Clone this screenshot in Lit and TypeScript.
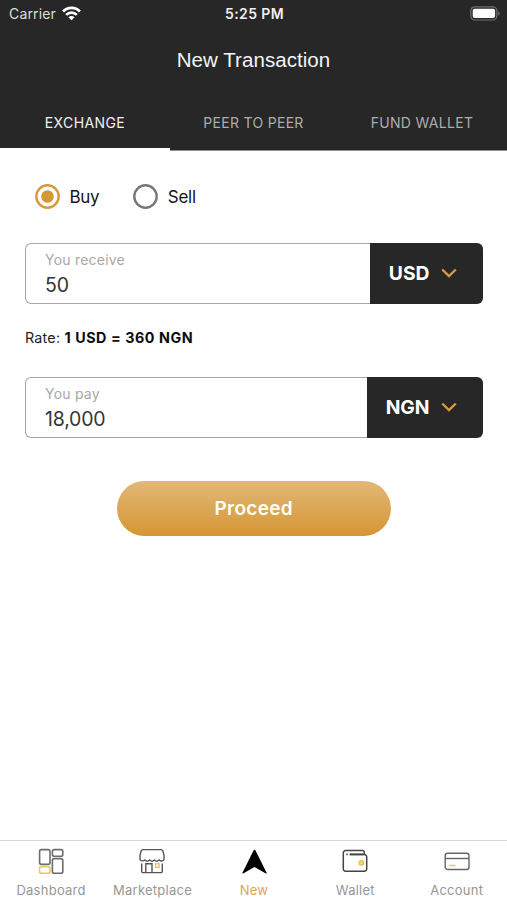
import { LitElement, html, css, svg } from "lit";
import { customElement } from "lit/decorators.js";
import { classMap } from "lit/directives/class-map.js";

@customElement("status-bar")
class StatusBar extends LitElement {
  static styles = css`
    :host { display: grid; grid-template-columns: 1fr auto 1fr; align-items: center; height: 27px; padding: 0 7px 1px 9px; color: #efefef; font-size: 14px; }
    .carrier { display: flex; align-items: center; gap: 6px; letter-spacing: 0.15px; color: #dedede; }
    .time { font-weight: 600; letter-spacing: 0.4px; }
    .battery { justify-self: end; display: block; }
    svg { display: block; }
  `;
  render() {
    return html`
      <div class="carrier"><span>Carrier</span>
        <svg width="19" height="15" viewBox="0 0 19 15" fill="none" stroke="#fff" stroke-width="2.7">
          <path d="M1.100 5.500a11.700 11.700 0 0 1 16.800 0"/><path d="M4.200 8.900a7.400 7.400 0 0 1 10.600 0"/>
          <path d="M9.500 14.300 6.400 11.200a4.400 4.400 0 0 1 6.200 0z" fill="#fff" stroke="none"/>
        </svg>
      </div>
      <div class="time">5:25 PM</div>
      <svg class="battery" width="30" height="15" viewBox="0 0 30 15">
        <rect x=".8" y=".8" width="26" height="13.2" rx="4" fill="none" stroke="#707073" stroke-width="1.2"/>
        <rect x="2.700" y="2.700" width="22.400" height="9.400" rx="2" fill="#fff"/>
        <path d="M28.200 5.200c2 .8 2 3.600 0 4.400z" fill="#707073"/>
      </svg>`;
  }
}

@customElement("tab-strip")
class TabStrip extends LitElement {
  static styles = css`
    :host { display: grid; grid-template-columns: 170px 167px 170px; height: 59px; border-bottom: 1px solid #8d8d8d; }
    .tab { display: flex; align-items: center; justify-content: center; padding-top: 3px; color: #adadad; font-size: 14px; letter-spacing: 0.3px; }
    .active { color: #f1f1f1; padding-top: 5px; border-bottom: 3px solid #fff; margin-bottom: -1px; letter-spacing: 0.4px; }
  `;
  render() {
    return ["EXCHANGE", "PEER TO PEER", "FUND WALLET"].map(
      (t, i) => html`<div class=${classMap({ tab: true, active: i === 0 })}>${t}</div>`
    );
  }
}

@customElement("radio-option")
class RadioOption extends LitElement {
  static properties = { label: {}, checked: { type: Boolean } };
  declare label: string;
  declare checked: boolean;
  static styles = css`
    :host { display: flex; align-items: center; gap: 9.5px; font-size: 17px; letter-spacing: -0.3px; color: #161616; }
    .ring { display: block; }
  `;
  render() {
    return html`
      <svg class="ring" width="25" height="25" viewBox="0 0 25 25">
        <circle cx="12.500" cy="12.500" r="11.200" fill="none" stroke=${this.checked ? "#d79a3a" : "#77787a"} stroke-width="2.4"/>
        <circle cx="12.500" cy="12.500" r="6.300" fill=${this.checked ? "#d49835" : "none"}/>
      </svg><span>${this.label}</span>`;
  }
}

@customElement("amount-field")
class AmountField extends LitElement {
  static properties = { label: {}, value: {}, currency: {} };
  declare label: string;
  declare value: string;
  declare currency: string;
  static styles = css`
    :host { display: flex; height: 61px; }
    .entry { flex: 1; box-sizing: border-box; border: 1px solid #a6a6a6; border-right: 0; border-radius: 6px 0 0 6px; padding: 6px 0 0 19px; }
    .label { font-size: 14px; line-height: 20px; letter-spacing: 0.22px; color: #a9a9a9; }
    .value { font-size: 19.5px; line-height: 30px; color: #353535; letter-spacing: -0.2px; }
    .currency { display: flex; align-items: center; gap: 11px; padding: 0 26px 0 18.5px; background: #272727; border-radius: 0 6px 6px 0; color: #fff; font-size: 19.3px; line-height: 23px; font-weight: 650; }
    svg { display: block; margin-top: -1px; }
  `;
  render() {
    return html`
      <div class="entry"><div class="label">${this.label}</div><div class="value">${this.value}</div></div>
      <div class="currency"><span>${this.currency}</span>
        <svg width="16" height="10" viewBox="0 0 16 10" fill="none" stroke="#d99a3c" stroke-width="2.4"><path d="m1.200 1.500 6.800 6.500 6.800-6.500"/></svg>
      </div>`;
  }
}

const icons = {
  dashboard: svg`<g fill="none" stroke="#6c6c6c" stroke-width="1.600">
    <rect x="1.600" y="1.600" width="10.400" height="14.800" rx="1.800"/><rect x="14.400" y="1.600" width="10.400" height="6.600" rx="1.800"/>
    <rect x="14.400" y="10.600" width="10.400" height="14.600" rx="1.800"/><rect x="1.600" y="18.600" width="10.400" height="6.600" rx="1.800" stroke="#ecc863"/></g>`,
  market: svg`<g fill="none" stroke="#555" stroke-width="1.400">
    <path d="M4 1.600h18a2 2 0 0 1 1.800 1.200l1.200 4.600v4.400q-2.400 2.400-4.800.2-2.400 2.300-4.800 0-2.400 2.300-4.800 0-2.400 2.300-4.800 0-2.400 1.800-4.800-.2V7.400L2.200 2.800A2 2 0 0 1 4 1.600z"/>
    <path d="M2.700 15.500v7.700a1.400 1.400 0 0 0 1.400 1.400h17.800a1.400 1.400 0 0 0 1.400-1.400v-7.700M6.800 24.600v-8.800h6.200v8.800M6.800 15.800h6.200"/>
    <rect x="16.600" y="15.800" width="3.600" height="3.600" stroke="#ecc863"/></g>`,
  arrow: svg`<path d="M13.500 1.700c.5 0 .8.400 1 .900l11.100 22.200c.3.600-.1 1-.7.700L13.500 18.900 2.200 25.500c-.6.300-1-.1-.7-.7L12.500 2.600c.2-.5.500-.9 1-.9z" fill="#000"/>`,
  wallet: svg`<g fill="none" stroke="#444" stroke-width="1.500">
    <path d="M3.700 2.600h16.600a2 2 0 0 1 2 2v2M3.700 2.600a2.300 2.300 0 0 0-2.400 2.400v15.800a2.300 2.300 0 0 0 2.400 2.400h18.600a2.300 2.300 0 0 0 2.400-2.400V9a2.300 2.300 0 0 0-2.400-2.400H7.500"/>
    <path d="M8 6.300h13.500M4.300 6.300h1.500" stroke-width="1.700"/><circle cx="19.300" cy="14.800" r="2.100" stroke="#e5be51"/><path d="M17.500 14.800h3.500" stroke="#ecc863"/></g>`,
  card: svg`<g fill="none" stroke="#666" stroke-width="1.400">
    <rect x="1.200" y="5.200" width="23.800" height="16.300" rx="2.500"/><path d="M1.200 10.500h23.800"/><path d="M4.800 17.500h7" stroke="#ecc863" stroke-width="1.400"/></g>`,
};

@customElement("bottom-nav")
class BottomNav extends LitElement {
  static styles = css`
    :host { display: grid; grid-template-columns: repeat(5, 1fr); height: 60px; box-sizing: border-box; border-top: 1px solid #d8d8d8; background: #fff; }
    .item { display: flex; flex-direction: column; align-items: center; padding: 7px 0 0 0.8px; gap: 6px; font-size: 13px; line-height: 18px; letter-spacing: 0.25px; color: #979797; }
    .active { color: #d9a656; }
    svg { display: block; }
  `;
  render() {
    const items = [
      ["Dashboard", icons.dashboard], ["Marketplace", icons.market], ["New", icons.arrow], ["Wallet", icons.wallet], ["Account", icons.card],
    ];
    return items.map(([name, icon]) => html`
      <div class=${classMap({ item: true, active: name === "New" })}>
        <svg width="26" height="27" viewBox="0 0 26 27">${icon}</svg><span>${name}</span>
      </div>`);
  }
}

@customElement("app-root")
class AppRoot extends LitElement {
  static styles = css`
    :host { display: flex; flex-direction: column; height: 900px; overflow: hidden; background: #fff; font-family: Inter, "Liberation Sans", sans-serif; }
    header { background: #272727; height: 151px; }
    h1 { margin: 0; height: 63px; text-align: center; font: 400 20.5px/63px "Liberation Sans", sans-serif; letter-spacing: 0.06px; color: #f4f4f4; }
    main { flex: 1; padding: 33px 24.5px 0 25px; }
    .options { display: flex; gap: 34px; padding-left: 10px; height: 25px; }
    .first { margin-top: 34px; }
    .rate { margin: 24px 0 29px; font-size: 14.3px; line-height: 20px; letter-spacing: 0.22px; color: #222; }
    .rate b { color: #0c0c0c; font-weight: 700; letter-spacing: 0.56px; }
    .proceed { display: block; width: 274px; height: 55px; margin: 43px auto 0; border: 0; border-radius: 28px; background: linear-gradient(#e2b878, #d59633); color: #fff; font: 600 19px Inter, sans-serif; letter-spacing: 0.3px; padding: 0; }
  `;
  render() {
    return html`
      <header><status-bar></status-bar><h1>New Transaction</h1><tab-strip></tab-strip></header>
      <main>
        <div class="options"><radio-option label="Buy" checked></radio-option><radio-option label="Sell"></radio-option></div>
        <amount-field class="first" label="You receive" value="50" currency="USD"></amount-field>
        <p class="rate">Rate: <b>1 USD = 360 NGN</b></p>
        <amount-field label="You pay" value="18,000" currency="NGN"></amount-field>
        <button class="proceed">Proceed</button>
      </main>
      <bottom-nav></bottom-nav>`;
  }
}
